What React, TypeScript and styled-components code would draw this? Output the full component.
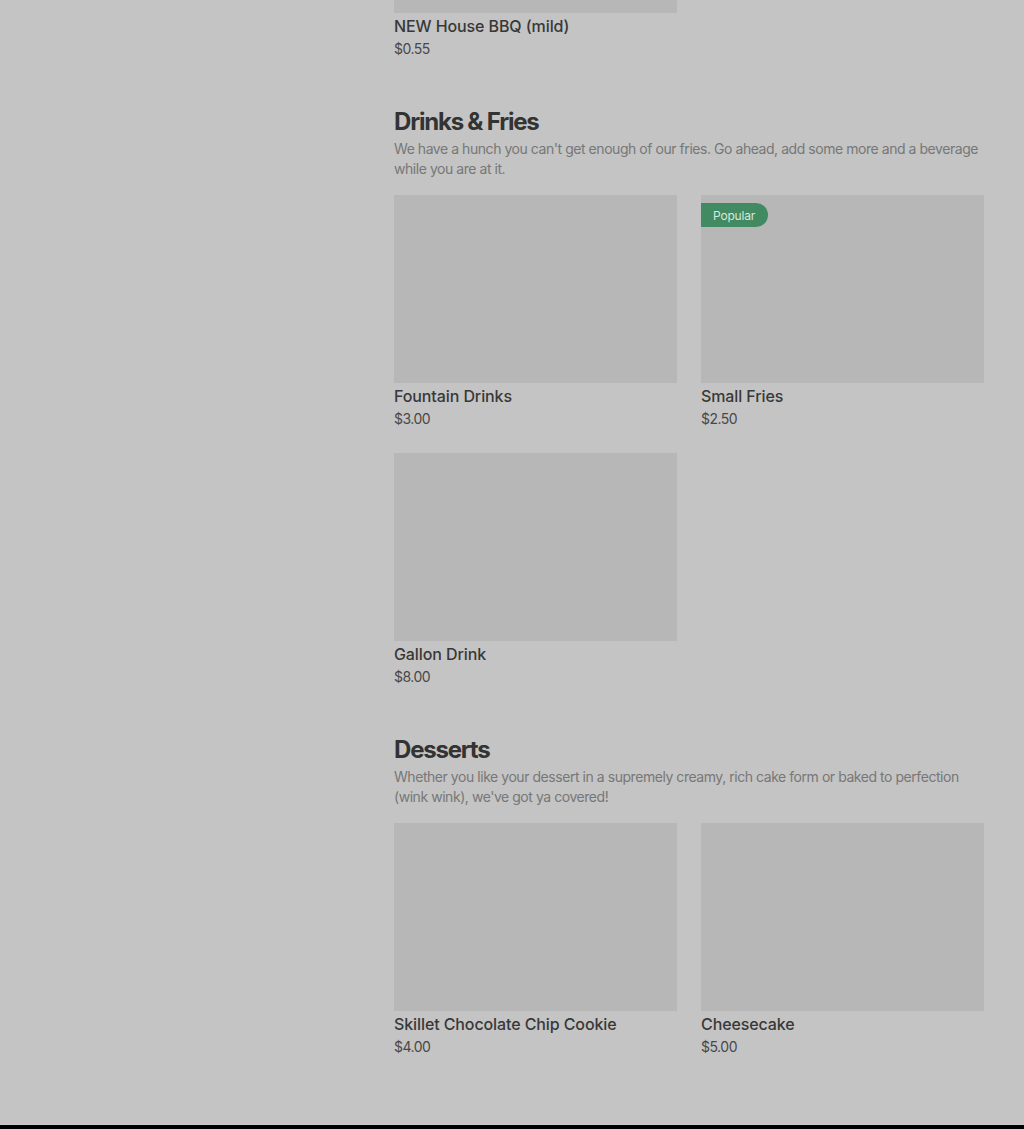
import React from 'react'
import styled, { createGlobalStyle } from 'styled-components'

const GlobalStyle = createGlobalStyle`
  html, body {
    margin: 0;
    padding: 0;
    background: #c4c4c4;
  }
  body {
    font-family: Inter, 'Open Sans', sans-serif;
    -webkit-font-smoothing: antialiased;
  }
`

interface MenuItem {
  name: string
  price: string
  popular?: boolean
}

interface MenuSection {
  title: string
  description: string
  items: MenuItem[]
}

const sections: MenuSection[] = [
  {
    title: 'Drinks & Fries',
    description:
      "We have a hunch you can't get enough of our fries. Go ahead, add some more and a beverage while you are at it.",
    items: [
      { name: 'Fountain Drinks', price: '$3.00' },
      { name: 'Small Fries', price: '$2.50', popular: true },
      { name: 'Gallon Drink', price: '$8.00' }
    ]
  },
  {
    title: 'Desserts',
    description:
      "Whether you like your dessert in a supremely creamy, rich cake form or baked to perfection (wink wink), we've got ya covered!",
    items: [
      { name: 'Skillet Chocolate Chip Cookie', price: '$4.00' },
      { name: 'Cheesecake', price: '$5.00' }
    ]
  }
]

const Page = styled.div`
  display: grid;
  grid-template-columns: 394px 590px 1fr;
  grid-template-rows: 1fr auto;
  min-height: 1129px;
`

const Sidebar = styled.aside``

const Main = styled.main`
  display: flex;
  flex-direction: column;
  gap: 47px;
  padding-bottom: 68px;
`

const Section = styled.section`
  display: flex;
  flex-direction: column;
`

const Title = styled.h2`
  margin: 0;
  font-size: 24px;
  line-height: 32px;
  font-weight: 700;
  letter-spacing: -1.2px;
  color: #333333;
`

const Description = styled.p`
  margin: 1px 0 16px;
  font-size: 14px;
  line-height: 20px;
  letter-spacing: -0.45px;
  color: #777777;
`

const Grid = styled.div`
  display: grid;
  grid-template-columns: repeat(2, 283px);
  column-gap: 24px;
  row-gap: 24px;
`

const Card = styled.div`
  display: flex;
  flex-direction: column;
`

const ImageBox = styled.div<{ $height?: number }>`
  position: relative;
  height: ${({ $height }) => $height ?? 188}px;
  background: #b7b7b7;
`

const Badge = styled.span`
  position: absolute;
  top: 8px;
  left: 0;
  height: 24px;
  padding: 0 13px 0 12px;
  display: flex;
  align-items: center;
  background: #418a62;
  color: #d8e8de;
  font-size: 12px;
  letter-spacing: -0.2px;
  border-radius: 0 12px 12px 0;
`

const Name = styled.div`
  margin-top: 2px;
  font-size: 16px;
  line-height: 22px;
  font-weight: 500;
  letter-spacing: -0.1px;
  color: #383838;
`

const Price = styled.div`
  margin-top: 2px;
  font-size: 14px;
  line-height: 20px;
  letter-spacing: -0.5px;
  color: #484848;
`

const Footer = styled.footer`
  grid-column: 1 / -1;
  height: 4px;
  background: #000;
  border-top: 1px solid #cbcbcb;
  margin-top: -1px;
`

const ItemCard = ({ item, imageHeight }: { item: MenuItem; imageHeight?: number }): JSX.Element => (
  <Card>
    <ImageBox $height={imageHeight}>{item.popular && <Badge>Popular</Badge>}</ImageBox>
    <Name>{item.name}</Name>
    <Price>{item.price}</Price>
  </Card>
)

export default function App (): JSX.Element {
  return (
    <>
      <GlobalStyle />
      <Page>
        <Sidebar />
        <Main>
          {/* tail of the section above, scrolled mostly out of view */}
          <Grid>
            <ItemCard item={{ name: 'NEW House BBQ (mild)', price: '$0.55' }} imageHeight={13} />
          </Grid>
          {sections.map((section) => (
            <Section key={section.title}>
              <Title>{section.title}</Title>
              <Description>{section.description}</Description>
              <Grid>
                {section.items.map((item) => (
                  <ItemCard key={item.name} item={item} />
                ))}
              </Grid>
            </Section>
          ))}
        </Main>
        <Footer />
      </Page>
    </>
  )
}
